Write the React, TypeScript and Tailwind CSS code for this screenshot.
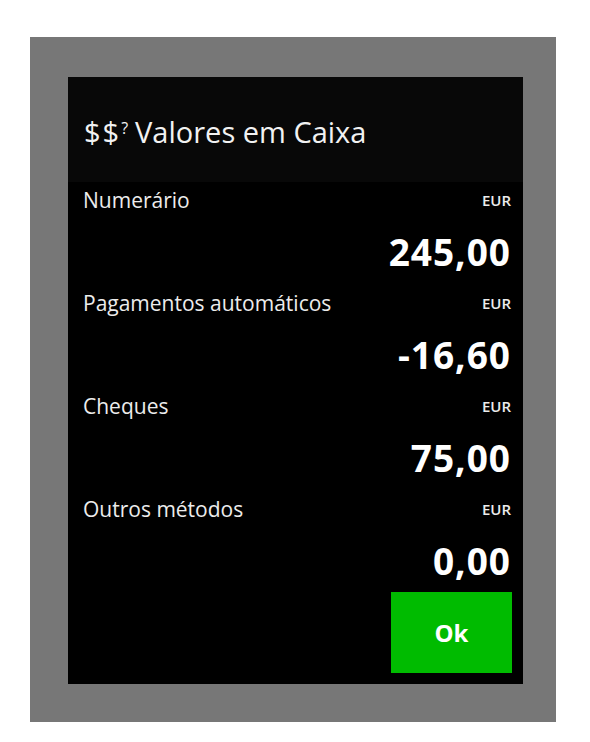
import React from "react";

const items = [
  { label: "Numerário", value: "245,00" },
  { label: "Pagamentos automáticos", value: "-16,60" },
  { label: "Cheques", value: "75,00" },
  { label: "Outros métodos", value: "0,00" },
];

export default function App() {
  return (
    <div
      className="w-[590px] h-[742px] bg-white pt-[37px] pl-[30px]"
      style={{ fontFamily: '"Open Sans", "Noto Sans", sans-serif' }}
    >
      <div className="w-[526px] h-[685px] bg-[#777777] pt-[40px] pl-[38px]">
        <div className="w-[455px] h-[607px] bg-black flex flex-col">
          <div className="h-[105px] bg-[#080808] pt-[33px] pl-[16px] text-[#f2f2f2] text-[29px] leading-[36px] whitespace-nowrap">
            <span className="tracking-[2px]">$$</span>
            <span className="text-[16px] align-[9px]">?</span>
            <span className="ml-[7px]">Valores em Caixa</span>
          </div>
          <div className="flex flex-col pt-[3.5px] pl-[15px] pr-[12px] text-[#ececec]">
            {items.map((it) => (
              <div key={it.label} className="h-[103px] flex flex-col">
                <div className="h-[28px] flex justify-between items-start">
                  <span className="text-[21px] leading-[28px]">{it.label}</span>
                  <span className="text-[15px] leading-[28px] font-semibold">EUR</span>
                </div>
                <div className="mt-[16px] h-[44px] text-right text-white text-[37px] leading-[44px] font-bold tracking-[1px]">
                  {it.value}
                </div>
              </div>
            ))}
          </div>
          <div className="flex justify-end pr-[11px] -mt-[5.5px]">
            <button className="w-[121px] h-[81px] bg-[#00bb00] text-white text-[24px] font-bold">
              Ok
            </button>
          </div>
        </div>
      </div>
    </div>
  );
}
